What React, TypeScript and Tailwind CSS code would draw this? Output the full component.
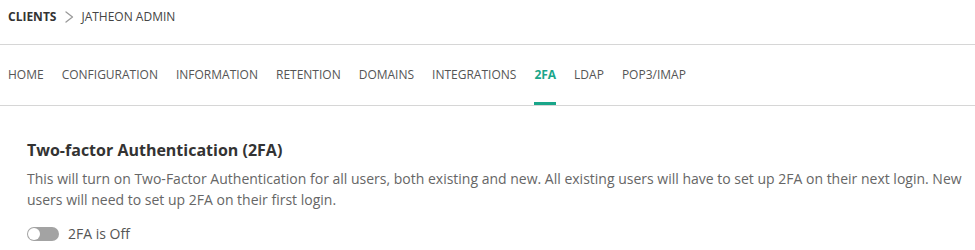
const tabs = ['HOME', 'CONFIGURATION', 'INFORMATION', 'RETENTION', 'DOMAINS', 'INTEGRATIONS', '2FA', 'LDAP', 'POP3/IMAP'];

export default function App() {
  return (
    <div className="min-h-screen bg-white text-[#555] font-['Open_Sans',sans-serif]">
      <div className="h-[45px] flex items-center px-2 pb-[10px] text-xs border-b border-[#d6d6d6]">
        <span className="font-bold text-[#333]">CLIENTS</span>
        <svg className="ml-[9px] mr-[7px]" width="9" height="12" viewBox="0 0 9 12" fill="none">
          <path d="M1 1l6.5 5L1 11" stroke="#9a9a9a" strokeWidth="1.3" strokeLinecap="round" strokeLinejoin="round" />
        </svg>
        <span className="text-[#444]">JATHEON ADMIN</span>
      </div>

      <nav className="h-[61px] flex items-stretch gap-[18px] px-2 text-xs border-b border-[#d6d6d6]">
        {tabs.map((t) => {
          const active = t === '2FA';
          return (
            <div
              key={t}
              className={
                active
                  ? 'flex items-center pt-[2px] border-b-[3px] border-[#1aa68a] font-bold text-[#1aa68a]'
                  : 'flex items-center pt-[2px] border-b-[3px] border-transparent'
              }
            >
              {t}
            </div>
          );
        })}
      </nav>

      <section className="pl-[27px] pr-[8px] pt-[34px]">
        <h2 className="text-base font-bold text-[#333] leading-5">Two-factor Authentication (2FA)</h2>
        <p className="mt-[8px] text-sm leading-[21px] text-[#666]">
          This will turn on Two-Factor Authentication for all users, both existing and new. All existing users will have to set up 2FA on their next login. New users will need to set up 2FA on their first login.
        </p>
        <div className="mt-[14px] flex items-center gap-[9px]">
          <button className="w-[32px] h-[14px] rounded-full bg-[#a3a3a3] flex items-center px-[1px]">
            <span className="w-[12px] h-[12px] rounded-full bg-white" />
          </button>
          <span className="text-sm text-[#555]">2FA is Off</span>
        </div>
      </section>
    </div>
  );
}
